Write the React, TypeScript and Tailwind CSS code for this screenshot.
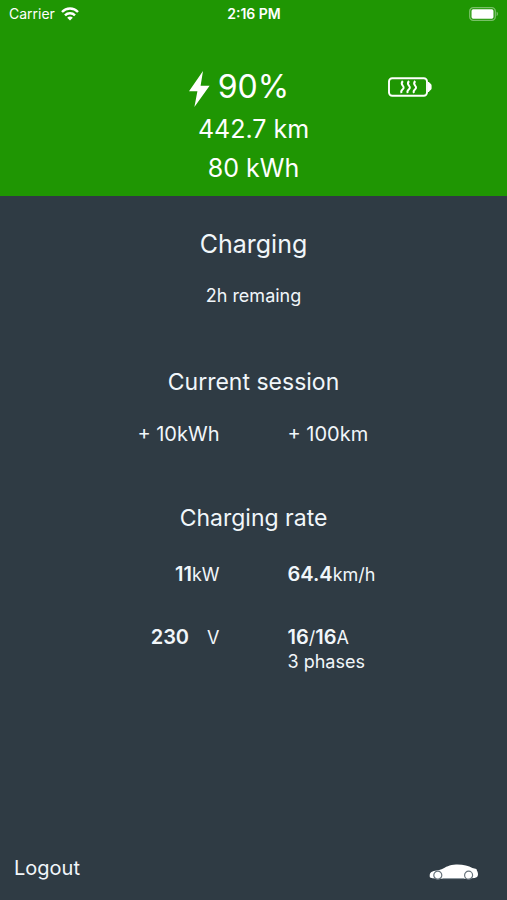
import type { ReactNode } from "react";

function WifiIcon() {
  return (
    <svg viewBox="0 0 18 14" className="h-3.5 w-[18px]" fill="none" stroke="currentColor" strokeWidth="2.4" aria-hidden="true">
      <path d="M1 5C5.4 0.4 12.6 0.4 17 5" />
      <path d="M4 8.3C6.7 5.5 11.3 5.5 14 8.3" />
      <path d="M9 13.6L6.2 10.7C7.8 9.1 10.2 9.1 11.8 10.7Z" fill="currentColor" stroke="none" />
    </svg>
  );
}

function PhoneBatteryIcon() {
  return (
    <svg viewBox="0 0 30 14" className="h-3.5 w-[30px]" aria-hidden="true">
      <rect x="0.7" y="0.7" width="25.6" height="12.6" rx="3.6" fill="none" stroke="white" strokeOpacity="0.4" strokeWidth="1.3" />
      <rect x="2.5" y="2.3" width="22" height="9.4" rx="1.6" fill="white" />
      <path d="M27.6 4.8C29.3 5.4 29.3 8.6 27.6 9.2Z" fill="white" fillOpacity="0.45" />
    </svg>
  );
}

function BoltIcon() {
  return (
    <svg viewBox="0 0 22 36" className="h-9 w-[22px]" fill="currentColor" aria-hidden="true">
      <path d="M15 0L1 20.2H9.4L6.4 36L21.6 14.8H12.6Z" />
    </svg>
  );
}

function BatteryHeatIcon() {
  return (
    <svg viewBox="0 0 44 20" className="h-5 w-11" fill="none" stroke="currentColor" role="img" aria-label="Battery heating">
      <rect x="1" y="1.2" width="38" height="17.6" rx="3.2" strokeWidth="1.9" />
      <path d="M40 5H41C41.2 6.4 43.6 6.6 43.6 8.4V11.6C43.6 13.4 41.2 13.6 41 15H40Z" fill="currentColor" stroke="none" />
      <g strokeWidth="2">
        <path d="M14.8 4C11.4 8 16.4 8.6 15.6 11C15 13 12 13 13.6 16" />
        <path d="M21 4C17.6 8 22.6 8.6 21.8 11C21.2 13 18.2 13 19.8 16" />
        <path d="M27.2 4C23.8 8 28.8 8.6 28 11C27.4 13 24.4 13 26 16" />
      </g>
    </svg>
  );
}

function CarIcon() {
  return (
    <svg viewBox="0 0 50 16" className="h-4 w-[50px]" aria-hidden="true">
      <path
        d="M1 13.5C0.3 12 0.6 9 2.4 8C5.2 6.4 9.6 6.2 12.6 5.2C16.8 3 20.4 0.6 27 0.4C34 0.2 39.4 1.6 43.4 4L47.4 4.9C47.8 6.6 49.2 8 49 10.6C48.8 12.7 47.7 13.7 45.6 14L35 14.8H13L3.4 14.3Z"
        fill="white"
      />
      <g fill="white" stroke="#66727b" strokeWidth="1.2">
        <circle cx="8.8" cy="11.2" r="4" />
        <circle cx="39.6" cy="11.2" r="4" />
      </g>
      <path d="M13.5 14.6H35" stroke="#87929a" />
    </svg>
  );
}

function Pair({ left, right, className = "" }: { left: ReactNode; right: ReactNode; className?: string }) {
  return (
    <div className={`grid w-full grid-cols-2 gap-x-[68px] ${className}`}>
      <div className="text-right">{left}</div>
      <div>{right}</div>
    </div>
  );
}

export default function App() {
  return (
    <div className="flex min-h-screen flex-col bg-[#2f3b44] font-['Inter',sans-serif] text-[#f1f6fa]">
      <header className="bg-[#1f9603] pb-2 text-white">
        {/* Status bar */}
        <div className="grid h-7 grid-cols-3 items-center pr-2 pl-[9px] text-sm">
          <div className="flex items-center gap-1.5">
            <span>Carrier</span>
            <WifiIcon />
          </div>
          <div className="text-center font-semibold">2:16 PM</div>
          <div className="flex justify-end">
            <PhoneBatteryIcon />
          </div>
        </div>

        {/* Battery level */}
        <div className="grid grid-cols-[1fr_auto_1fr] items-center pt-9">
          <div className="flex justify-end pt-1 pr-2">
            <BoltIcon />
          </div>
          <div className="text-[32px] leading-[46px]">90%</div>
          <div className="flex justify-end pr-[75px]">
            <BatteryHeatIcon />
          </div>
        </div>
        <div className="text-center text-[25px] leading-[39px]">
          <p>442.7 km</p>
          <p>80 kWh</p>
        </div>
      </header>

      <main className="flex flex-1 flex-col items-center pt-7">
        <h1 className="text-[25px] leading-10">Charging</h1>
        <p className="mt-5 text-lg leading-6">2h remaing</p>

        <h2 className="mt-14 text-[23px] leading-9">Current session</h2>
        <Pair className="mt-5 text-xl leading-7" left="+ 10kWh" right="+ 100km" />

        <h2 className="mt-13 text-[23px] leading-9">Charging rate</h2>
        <Pair
          className="mt-6 text-lg leading-7"
          left={<><b className="text-xl font-semibold">11</b>kW</>}
          right={<><b className="text-xl font-semibold">64.4</b>km/h</>}
        />
        <Pair
          className="mt-9 text-lg leading-6"
          left={<><b className="mr-4.5 text-xl leading-6 font-semibold">230</b>V</>}
          right={
            <>
              <p><b className="text-xl leading-6 font-semibold">16</b>/<b className="text-xl leading-6 font-semibold">16</b>A</p>
              <p>3 phases</p>
            </>
          }
        />
      </main>

      <footer className="flex items-center justify-between pr-7 pb-4 pl-3.5">
        <button type="button" className="text-xl leading-8">Logout</button>
        <button type="button" aria-label="Car" className="pt-2">
          <CarIcon />
        </button>
      </footer>
    </div>
  );
}
